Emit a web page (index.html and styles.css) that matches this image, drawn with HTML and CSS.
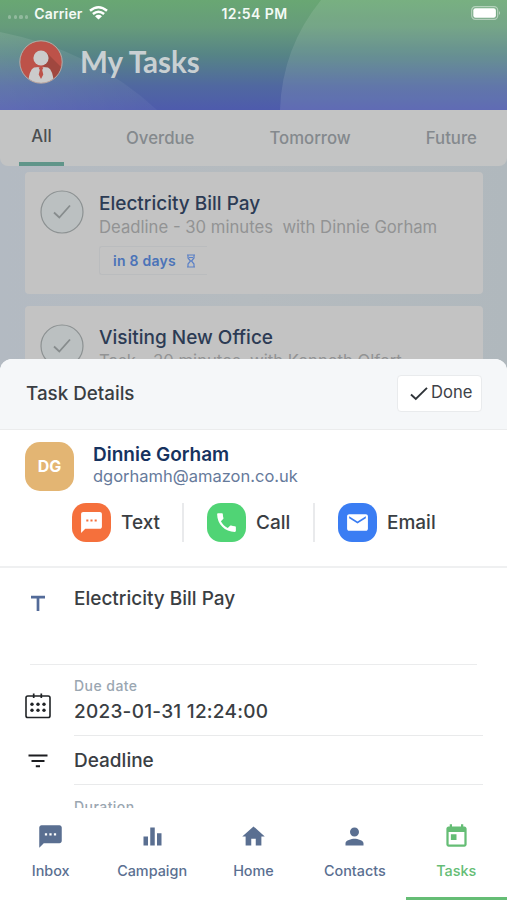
FILE: index.html
```html
<!DOCTYPE html>
<html lang="en">
<head>
<meta charset="utf-8">
<meta name="viewport" content="width=device-width, initial-scale=1">
<title>My Tasks</title>
<link rel="stylesheet" href="styles.css">
</head>
<body>
<div class="phone">
  <header class="header">
    <svg class="header-art" viewBox="0 0 507 110" preserveAspectRatio="none" aria-hidden="true">
      <defs><linearGradient id="haze" x1="0" y1="0" x2="1" y2="0"><stop offset="0" stop-color="#fff" stop-opacity=".1"/><stop offset="1" stop-color="#fff" stop-opacity=".04"/></linearGradient></defs>
      <path d="M0 32 Q92 50 157 110 H0Z" fill="url(#haze)"/>
      <path d="M321 0 Q282 48 280 110 H507 V0Z" fill="#fff" fill-opacity=".1"/>
    </svg>
    <div class="status">
      <div class="status-left">
        <span class="dots"><i></i><i></i><i></i><i></i></span>
        <span class="carrier">Carrier</span>
        <svg class="wifi" viewBox="0 0 19 14" width="19" height="14"><path d="M1 4.800Q9.500-2.200 18 4.800M3.900 8Q9.500 3.400 15.100 8" fill="none" stroke="#fff" stroke-width="2.500"/><path d="M6 10.200Q9.500 7.300 13 10.200L9.500 13.600Z" fill="#fff"/></svg>
      </div>
      <span class="time">12:54 PM</span>
      <div class="status-right">
        <svg viewBox="0 0 30 14" width="30" height="14"><rect x=".7" y=".7" width="26" height="12.600" rx="3.600" fill="none" stroke="#fff" stroke-opacity=".45" stroke-width="1.200"/><rect x="2.300" y="2.300" width="22.600" height="9.400" rx="2.200" fill="#fff"/><path d="M28 5q2 2 0 4z" fill="#fff" fill-opacity=".5"/></svg>
      </div>
    </div>
    <div class="title-row">
      <svg class="avatar" viewBox="0 0 44 44" width="44" height="44">
        <defs><clipPath id="face"><circle cx="22" cy="22" r="21"/></clipPath></defs>
        <circle cx="22" cy="22" r="21" fill="#bd5249"/>
        <g clip-path="url(#face)">
          <path d="M28 13L43 28V44H30L24 24Z" fill="#a0473f"/>
          <path d="M9 44Q10 30 15 27.500L20 27L22 29L24 27L29 27.500Q34 30 35 44Z" fill="#cbcbcb"/>
          <path d="M19.500 27.500H24.500L23.200 30L24.300 34.500L22 39L19.700 34.500L20.800 30Z" fill="#bd5249"/>
          <circle cx="22" cy="18" r="7.600" fill="#cbcbcb"/>
        </g>
        <circle cx="22" cy="22" r="21.200" fill="none" stroke="#b9aaa4" stroke-width="1"/>
      </svg>
      <h1>My Tasks</h1>
    </div>
  </header>

  <nav class="tabs">
    <span class="tab tab-active">All</span>
    <span class="tab">Overdue</span>
    <span class="tab">Tomorrow</span>
    <span class="tab">Future</span>
  </nav>

  <main class="list">
    <article class="card">
      <svg class="check" viewBox="0 0 44 44" width="44" height="44"><circle cx="22" cy="22" r="21" fill="#bbc0c1" stroke="#8c9192" stroke-width="1.200"/><path d="M14 22.500L19.300 27.500L30 15.500" fill="none" stroke="#878c8d" stroke-width="1.800"/></svg>
      <div class="card-body">
        <h2>Electricity Bill Pay</h2>
        <p>Deadline - 30 minutes&nbsp; with Dinnie Gorham</p>
        <div class="chip"><span>in 8 days</span>
          <svg viewBox="0 0 10 14" width="10" height="14"><path d="M1 1H9M1 13H9M2 1V4L4.500 7L2 10V13M8 1V4L5.500 7L8 10V13M3 3.500H7" fill="none" stroke="#5b80c6" stroke-width="1.200"/></svg>
        </div>
      </div>
    </article>
    <article class="card">
      <svg class="check" viewBox="0 0 44 44" width="44" height="44"><circle cx="22" cy="22" r="21" fill="#bbc0c1" stroke="#8c9192" stroke-width="1.200"/><path d="M14 22.500L19.300 27.500L30 15.500" fill="none" stroke="#878c8d" stroke-width="1.800"/></svg>
      <div class="card-body">
        <h2>Visiting New Office</h2>
        <p>Task - 30 minutes&nbsp; with Kenneth Olfert</p>
      </div>
    </article>
  </main>

  <section class="sheet">
    <div class="sheet-head">
      <h3>Task Details</h3>
      <button class="done"><svg viewBox="0 0 18 14" width="18" height="14"><path d="M1 7.500L5.800 12L17 .8" fill="none" stroke="#2f3439" stroke-width="1.900"/></svg><span>Done</span></button>
    </div>

    <div class="contact">
      <div class="person">
        <div class="initials">DG</div>
        <div class="who">
          <div class="name">Dinnie Gorham</div>
          <div class="mail">dgorhamh@amazon.co.uk</div>
        </div>
      </div>
      <div class="actions">
        <div class="action a-text"><span class="blob orange"><svg viewBox="0 0 24 24" width="25" height="25"><path fill="#fff" d="M20 2H4c-1.100 0-2 .9-2 2v18l4-4h14c1.100 0 2-.9 2-2V4c0-1.100-.9-2-2-2zM9 11H7V9h2v2zm4 0h-2V9h2v2zm4 0h-2V9h2v2z"/></svg></span><span>Text</span></div>
        <div class="action a-call"><span class="blob green"><svg viewBox="0 0 24 24" width="25" height="25"><path fill="#fff" d="M6.620 10.790c1.440 2.830 3.760 5.140 6.590 6.590l2.200-2.200c.27-.27.67-.36 1.020-.24 1.120.37 2.330.57 3.570.57.55 0 1 .45 1 1V20c0 .55-.45 1-1 1-9.390 0-17-7.610-17-17 0-.55.45-1 1-1h3.500c.55 0 1 .45 1 1 0 1.250.2 2.450.57 3.570.11.35.03.74-.25 1.020l-2.200 2.200z"/></svg></span><span>Call</span></div>
        <div class="action a-email"><span class="blob blue"><svg viewBox="0 0 24 24" width="25" height="25"><path fill="#fff" d="M20 4H4c-1.100 0-1.990.9-1.990 2L2 18c0 1.100.9 2 2 2h16c1.100 0 2-.9 2-2V6c0-1.100-.9-2-2-2zm0 4l-8 5-8-5V6l8 5 8-5v2z"/></svg></span><span>Email</span></div>
      </div>
    </div>

    <div class="fields">
      <div class="row row-title">
        <svg viewBox="0 0 16 16" width="16" height="16"><path d="M1 2.200H15M8 2V16" fill="none" stroke="#536b99" stroke-width="2.700"/></svg>
        <span>Electricity Bill Pay</span>
      </div>
      <div class="row row-date">
        <svg viewBox="0 0 26 26" width="26" height="26"><rect x="1" y="3" width="24" height="21.500" rx="1.800" fill="none" stroke="#202326" stroke-width="1.600"/><path d="M8.700 .5V5M16.300 .5V5" stroke="#202326" stroke-width="1.700"/><g fill="#202326"><circle cx="7" cy="11.300" r="1.700"/><circle cx="13" cy="11.300" r="1.700"/><circle cx="19" cy="11.300" r="1.700"/><circle cx="7" cy="17.300" r="1.700"/><circle cx="13" cy="17.300" r="1.700"/><circle cx="19" cy="17.300" r="1.700"/></g></svg>
        <div class="cell"><div class="label l1">Due date</div><div class="value v1">2023-01-31 12:24:00</div></div>
      </div>
      <div class="row row-type">
        <svg viewBox="0 0 20 14" width="20" height="14"><path d="M.5 1.500H19.500M3.500 7H16.500M7.800 12.300H12" fill="none" stroke="#1c1d20" stroke-width="2.100"/></svg>
        <div class="cell"><div class="value v2">Deadline</div></div>
      </div>
      <div class="row row-duration"><div class="label">Duration</div></div>
    </div>

    <nav class="bottom">
      <div class="item"><svg viewBox="0 0 24 24" width="27" height="27"><path fill="currentColor" d="M20 2H4c-1.100 0-2 .9-2 2v18l4-4h14c1.100 0 2-.9 2-2V4c0-1.100-.9-2-2-2zM9 11H7V9h2v2zm4 0h-2V9h2v2zm4 0h-2V9h2v2z"/></svg><span>Inbox</span></div>
      <div class="item"><svg viewBox="0 0 24 24" width="27" height="27"><path fill="currentColor" d="M4 12h4v8H4zM10 4h4v16h-4zM16 9h4v11h-4z"/></svg><span>Campaign</span></div>
      <div class="item"><svg viewBox="0 0 24 24" width="27" height="27"><path fill="currentColor" d="M10 20v-6h4v6h5v-8h3L12 3 2 12h3v8z"/></svg><span>Home</span></div>
      <div class="item"><svg viewBox="0 0 24 24" width="27" height="27"><path fill="currentColor" d="M12 12c2.210 0 4-1.790 4-4s-1.790-4-4-4-4 1.790-4 4 1.790 4 4 4zm0 2c-2.670 0-8 1.340-8 4v2h16v-2c0-2.660-5.330-4-8-4z"/></svg><span>Contacts</span></div>
      <div class="item item-active"><svg viewBox="0 0 24 24" width="27" height="27"><path fill="currentColor" d="M19 3h-1V1h-2v2H8V1H6v2H5c-1.110 0-1.990.9-1.990 2L3 19c0 1.100.89 2 2 2h14c1.100 0 2-.9 2-2V5c0-1.100-.9-2-2-2zm0 16H5V8h14v11zM7 10h5v5H7z"/></svg><span>Tasks</span></div>
    </nav>
  </section>
</div>
</body>
</html>
```
FILE: styles.css
```css
* { box-sizing: border-box; margin: 0; padding: 0; }
body { font-family: Inter, "Liberation Sans", sans-serif; background: #fff; }
svg { display: block; flex: none; }
span, h1, h2, h3, p { white-space: nowrap; }
.phone { position: relative; width: 507px; height: 900px; overflow: hidden; background: linear-gradient(90deg, #b3bac2, #b5bbbf 50%, #b0b8bd); }

.header { position: relative; height: 110px; background: linear-gradient(180deg, #69a773 0%, #669b7b 25%, #568486 50%, #5068a0 78%, #4e5bac 100%); }
.header-art { position: absolute; inset: 0; width: 100%; height: 100%; }
.status { position: relative; display: grid; grid-template-columns: 1fr auto 1fr; align-items: center; height: 26px; padding: 0 6px 0 8px; color: #f4faf5; font-size: 14px; font-weight: 600; }
.carrier { letter-spacing: .15px; }
.time { letter-spacing: .4px; }
.status-left { display: flex; align-items: center; }
.dots { display: flex; gap: 2.500px; padding-top: 8px; margin-right: 6px; }
.dots i { width: 3.200px; height: 3.200px; border-radius: 50%; background: #fff; opacity: .28; }
.wifi { margin-left: 6px; }
.status-right { display: flex; justify-content: flex-end; }
.title-row { position: relative; display: flex; align-items: center; gap: 17px; padding: 14px 0 0 19px; }
h1 { font: 700 29.500px/44px Lato, sans-serif; color: #c9d0d2; }

.tabs { display: flex; height: 56px; padding-left: 19px; background: #c3c4c4; border-radius: 0 0 8px 8px; color: #84898d; font-size: 16.750px; font-weight: 500; line-height: 56px; }
.tab + .tab { margin-left: 75px; }
.tab-active + .tab { margin-left: 62px; }
.tab-active { width: 45px; color: #4b4e50; text-align: center; line-height: 53px; border-bottom: 4px solid #60958a; }

.list { display: flex; flex-direction: column; gap: 12px; padding: 6px 24px 0 25px; }
.card { display: flex; gap: 15px; height: 122px; padding: 18px 0 0 15px; background: #c3c3c3; border-radius: 4px; }
h2 { font-size: 19px; line-height: 27px; font-weight: 500; color: #2c3b54; }
.card p { font-size: 16.700px; line-height: 21px; color: #929394; }
.chip { display: flex; align-items: center; gap: 10px; width: 108px; height: 29px; margin-top: 8px; padding-left: 13px; border: 1px solid #babcbe; border-right: 0; border-radius: 3px 0 0 3px; color: #4b73b8; font-size: 14px; font-weight: 600; letter-spacing: .25px; }

.sheet { position: absolute; inset: 359px 0 0; display: flex; flex-direction: column; background: #fff; border-radius: 12px 12px 0 0; overflow: hidden; color: #3a3e43; }
.sheet-head { display: flex; justify-content: space-between; align-items: center; height: 71px; padding: 0 25px 1px 26px; background: #f5f7f9; border-bottom: 1.500px solid #ebeced; }
h3 { font-size: 18.800px; font-weight: 500; }
.done { display: flex; align-items: center; gap: 3px; width: 85px; height: 37px; padding-left: 12px; background: #fff; border: 1px solid #e9ebed; border-radius: 4px; font: 400 16.600px/34px Inter, sans-serif; color: #3e4247; }
.done span { padding-bottom: 3px; }
.contact { height: 138px; padding: 12px 25px 0; border-bottom: 2px solid #eff0f1; }
.person { display: flex; gap: 19px; }
.initials { width: 49px; height: 49px; border-radius: 15px; background: #e3b573; color: #fff; font-size: 16px; font-weight: 700; line-height: 49px; text-align: center; }
.name { color: #16325f; font-size: 19px; font-weight: 600; line-height: 25px; }
.mail { color: #667a9b; font-size: 16.500px; line-height: 19px; }
.actions { display: flex; margin: 12px 0 0 47px; }
.action { display: flex; align-items: center; gap: 10px; height: 39px; font-size: 19px; font-weight: 500; }
.a-text { width: 112px; border-right: 2px solid #e9eaec; }
.a-call { width: 131px; padding-left: 23px; border-right: 2px solid #e9eaec; }
.a-email { padding-left: 23px; }
.blob { display: grid; place-items: center; flex: none; width: 39px; height: 39px; border-radius: 14px; }
.orange { background: #f5703c; }
.green { background: #50d475; }
.blue { background: #3a7df3; }

.fields { flex: 1; min-height: 0; overflow: hidden; }
.row { display: flex; }
.row-title { height: 97px; margin: 0 30px; padding-top: 18px; border-bottom: 1.500px solid #ebeced; font-size: 19px; line-height: 26px; font-weight: 500; gap: 28px; }
.row-title svg { margin-top: 9px; }
.row-date { height: 71px; padding: 0 24px 0 25px; gap: 23px; }
.row-date svg { margin-top: 28px; }
.cell { flex: 1; border-bottom: 1.500px solid #e9eaeb; }
.label { color: #9aa6b1; font-size: 14px; line-height: 18px; font-weight: 500; letter-spacing: .45px; }
.l1 { margin-top: 12px; }
.value { font-size: 19px; font-weight: 500; line-height: 26px; }
.v1 { margin-top: 4px; letter-spacing: .25px; }
.row-type { height: 49px; padding: 0 24px 0 28px; gap: 26px; }
.row-type svg { margin-top: 18px; }
.v2 { margin-top: 12px; }
.row-duration { padding: 13px 0 0 74px; }

.bottom { flex: none; display: grid; grid-template-columns: repeat(5, 1fr); height: 92px; background: #fff; color: #5a6f91; }
.item { display: flex; flex-direction: column; align-items: center; gap: 12px; padding-top: 15px; font-size: 14.400px; font-weight: 500; line-height: 17px; }
.item-active { color: #65bd75; border-bottom: 3px solid #65bd75; }
```
